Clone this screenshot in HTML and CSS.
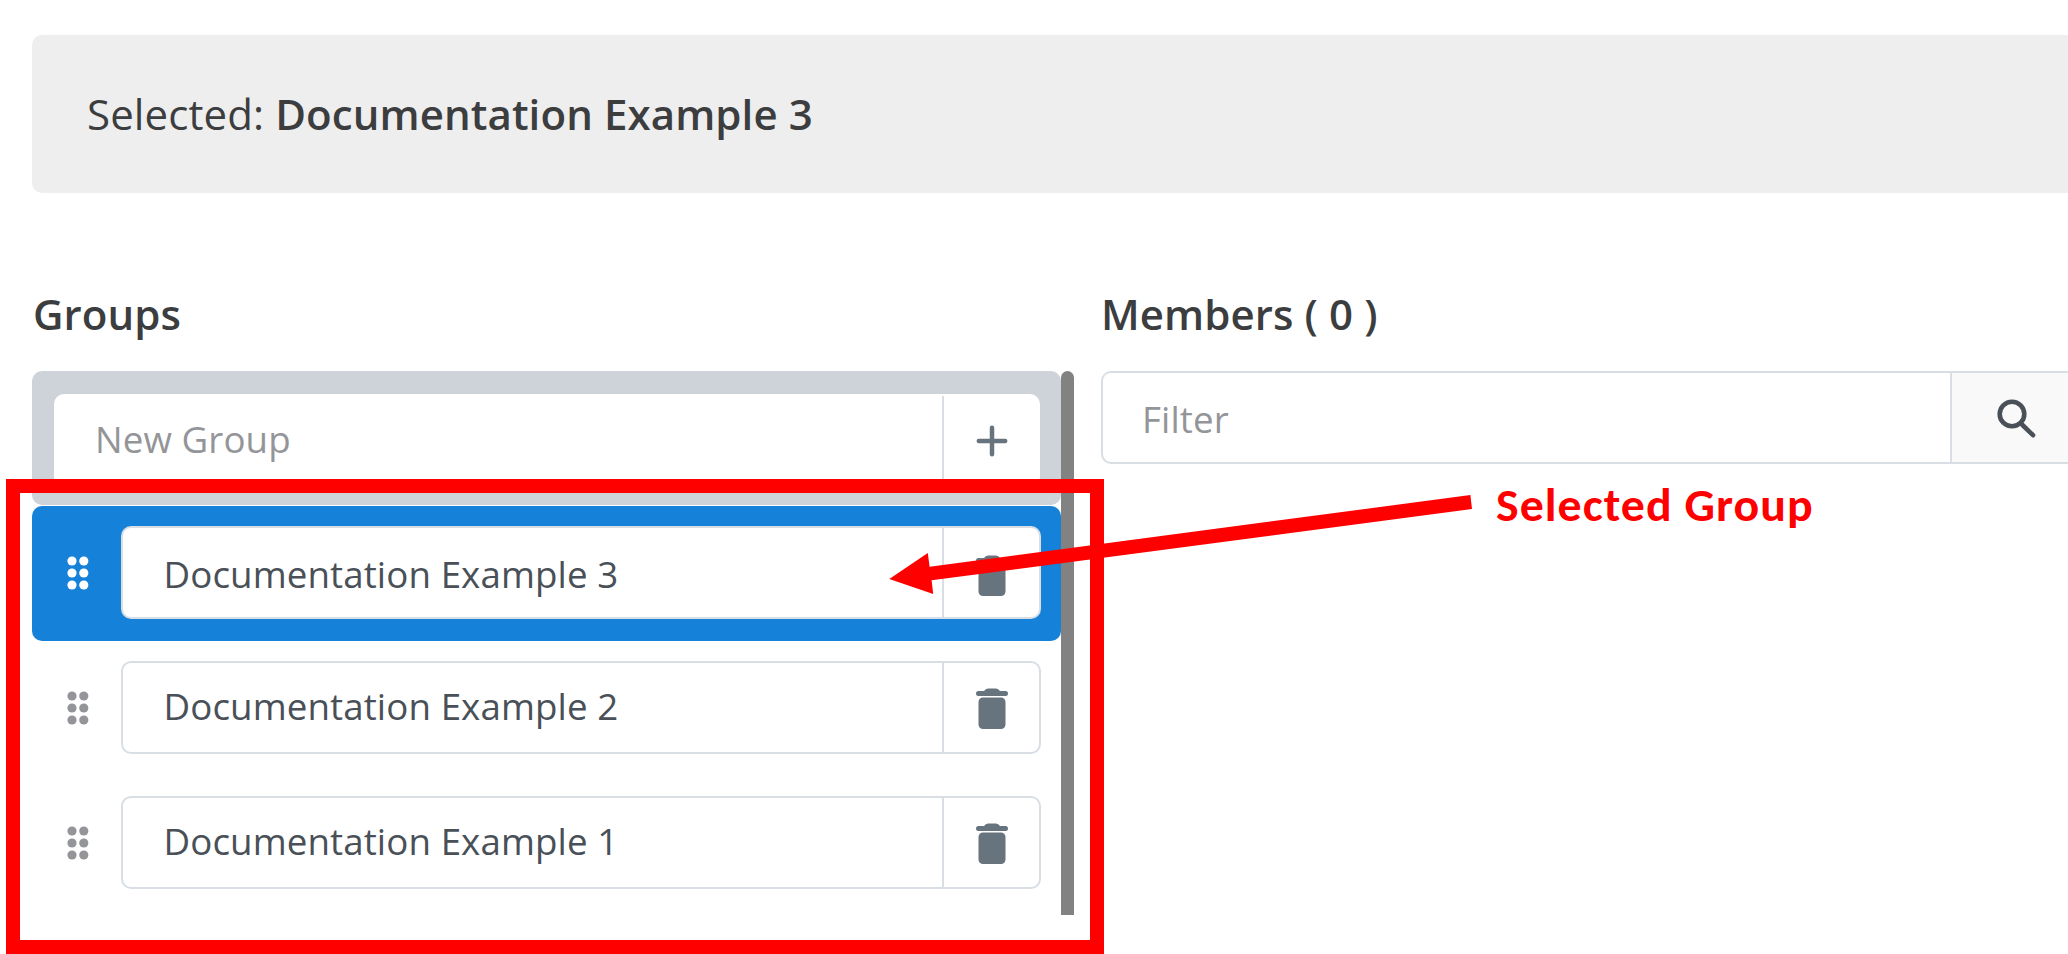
FILE: index.html
```html
<!DOCTYPE html>
<html lang="en">
<head>
<meta charset="utf-8">
<title>Groups</title>
<link rel="stylesheet" href="styles.css">
</head>
<body>
<svg class="defs" aria-hidden="true">
  <symbol id="grip" viewBox="0 0 22 34"><circle cx="5" cy="5" r="4.6"/><circle cx="16.8" cy="5" r="4.6"/><circle cx="5" cy="17" r="4.6"/><circle cx="16.8" cy="17" r="4.6"/><circle cx="5" cy="29" r="4.6"/><circle cx="16.8" cy="29" r="4.6"/></symbol>
  <symbol id="trash" viewBox="0 0 32 42"><path d="M2.5 3H8Q9.500 .5 12 .5H20Q22.500 .5 24 3H29.500A2.200 2.200 0 0 1 29.500 8H2.500A2.200 2.200 0 0 1 2.500 3Z"/><rect x="2.500" y="9.500" width="27" height="31.500" rx="4.500"/></symbol>
</svg>
<header class="banner"><span class="banner-label">Selected: </span><strong class="banner-value">Documentation Example 3</strong></header>
<main class="columns">
  <section class="groups">
    <h2 class="title">Groups</h2>
    <div class="scroller">
      <div class="list">
        <div class="new-row">
          <div class="field"><span class="text placeholder new-text">New Group</span><span class="action"><svg class="plus" viewBox="0 0 32 32"><path d="M16 2.800V29.200M2.800 16H29.200"/></svg></span></div>
        </div>
        <div class="row selected">
          <span class="handle"><svg class="grip"><use href="#grip"/></svg></span>
          <div class="field"><span class="text">Documentation Example 3</span><span class="action"><svg class="trash"><use href="#trash"/></svg></span></div>
        </div>
        <div class="row">
          <span class="handle"><svg class="grip"><use href="#grip"/></svg></span>
          <div class="field"><span class="text">Documentation Example 2</span><span class="action"><svg class="trash"><use href="#trash"/></svg></span></div>
        </div>
        <div class="row">
          <span class="handle"><svg class="grip"><use href="#grip"/></svg></span>
          <div class="field"><span class="text">Documentation Example 1</span><span class="action"><svg class="trash"><use href="#trash"/></svg></span></div>
        </div>
      </div>
      <div class="scrollbar"></div>
    </div>
  </section>
  <section class="members">
    <h2 class="title members-title">Members ( 0 )</h2>
    <div class="field filter"><span class="text placeholder filter-text">Filter</span><span class="action search-action"><svg class="search" viewBox="0 0 40 40"><circle cx="15" cy="15" r="12.300"/><path d="M25.500 26L36 36.200"/></svg></span></div>
  </section>
</main>
<div class="highlight"></div>
<svg class="arrow" viewBox="0 0 2068 954"><path d="M889.300 579L927.800 553L929.600 566.800L1470.400 495L1472 509L931.600 580.300L933.200 594Z"/></svg>
<div class="callout">Selected Group</div>
</body>
</html>
```
FILE: styles.css
```css
* { box-sizing: border-box; }
body {
  margin: 0;
  width: 2068px;
  height: 954px;
  padding: 35px 0 0 32px;
  position: relative;
  overflow: hidden;
  background: #fff;
  color: #3c3d3e;
  font-family: "Open Sans", "Noto Sans", sans-serif;
}
.defs { display: none; }
.banner {
  height: 158px;
  padding: 0 0 0 55px;
  border-radius: 10px 0 0 10px;
  background: #eee;
  font-size: 42px;
  line-height: 158px;
  letter-spacing: 0.1px;
  white-space: pre;
}
.banner-value { font-weight: 600; }
.columns { display: flex; gap: 27px; padding-top: 91px; }
.groups { width: 1042px; flex: none; }
.members { flex: 1; }
.title {
  margin: 0;
  height: 87px;
  padding-left: 1px;
  font-size: 42px;
  line-height: 60px;
  font-weight: 600;
  letter-spacing: 0.1px;
  white-space: nowrap;
}
.members-title { padding-left: 0; }
.scroller { display: flex; height: 544px; }
.list { width: 1029px; }
.scrollbar { width: 13px; border-radius: 7px 7px 0 0; background: #828282; }
.new-row { height: 134px; margin-bottom: 1px; padding: 23px 21px 18px 22px; border-radius: 10px; background: #ced3da; }
.new-row .field { border-color: #fff; }
.row { display: flex; height: 135px; padding: 20px 20px 22px 0; border-radius: 10px; color: #939598; }
.selected { background: #1681d9; color: #fff; }
.handle { width: 89px; flex: none; padding: 30px 0 0 34.5px; }
.grip { display: block; width: 22px; height: 34px; fill: currentColor; }
.field {
  display: flex;
  flex: 1;
  height: 93px;
  border: 2px solid #d8dee3;
  border-radius: 10px;
  background: #fff;
  overflow: hidden;
}
.text {
  flex: 1;
  padding-left: 40.500px;
  color: #495057;
  font-size: 36.7px;
  line-height: 87px;
  letter-spacing: 0.1px;
  white-space: nowrap;
}
.selected .text { line-height: 93px; }
.new-text { padding-left: 39px; }
.filter-text { line-height: 92px; padding-left: 39px; }
.placeholder { color: #939598; }
.action {
  width: 97px;
  flex: none;
  display: flex;
  align-items: center;
  justify-content: center;
  border-left: 2px solid #d8dee3;
}
.new-row .action { width: 96px; }
.trash { width: 32px; height: 42px; margin-top: 3px; fill: #68747d; }
.selected .trash { margin-top: 6px; }
.plus { width: 32px; height: 32px; margin-left: 1px; stroke: #68747d; stroke-width: 4.5; stroke-linecap: round; }
.filter { border-right: 0; border-radius: 10px 0 0 10px; }
.search-action { width: 118px; justify-content: flex-start; padding: 2px 0 0 45px; background: #f9f9f9; }
.search { width: 40px; height: 40px; fill: none; stroke: #495057; stroke-width: 4.600; stroke-linecap: round; }
.highlight { position: absolute; left: 6px; top: 479px; width: 1098px; height: 475px; border: 14px solid #f00; }
.arrow { position: absolute; inset: 0; width: 2068px; height: 954px; fill: #f00; }
.callout {
  position: absolute;
  left: 1496px;
  top: 475px;
  color: #f00;
  font: 700 46px/60px Carlito, Calibri, Lato, sans-serif;
  letter-spacing: 1px;
  white-space: nowrap;
  transform: scaleX(1.04);
  transform-origin: left;
}
```
